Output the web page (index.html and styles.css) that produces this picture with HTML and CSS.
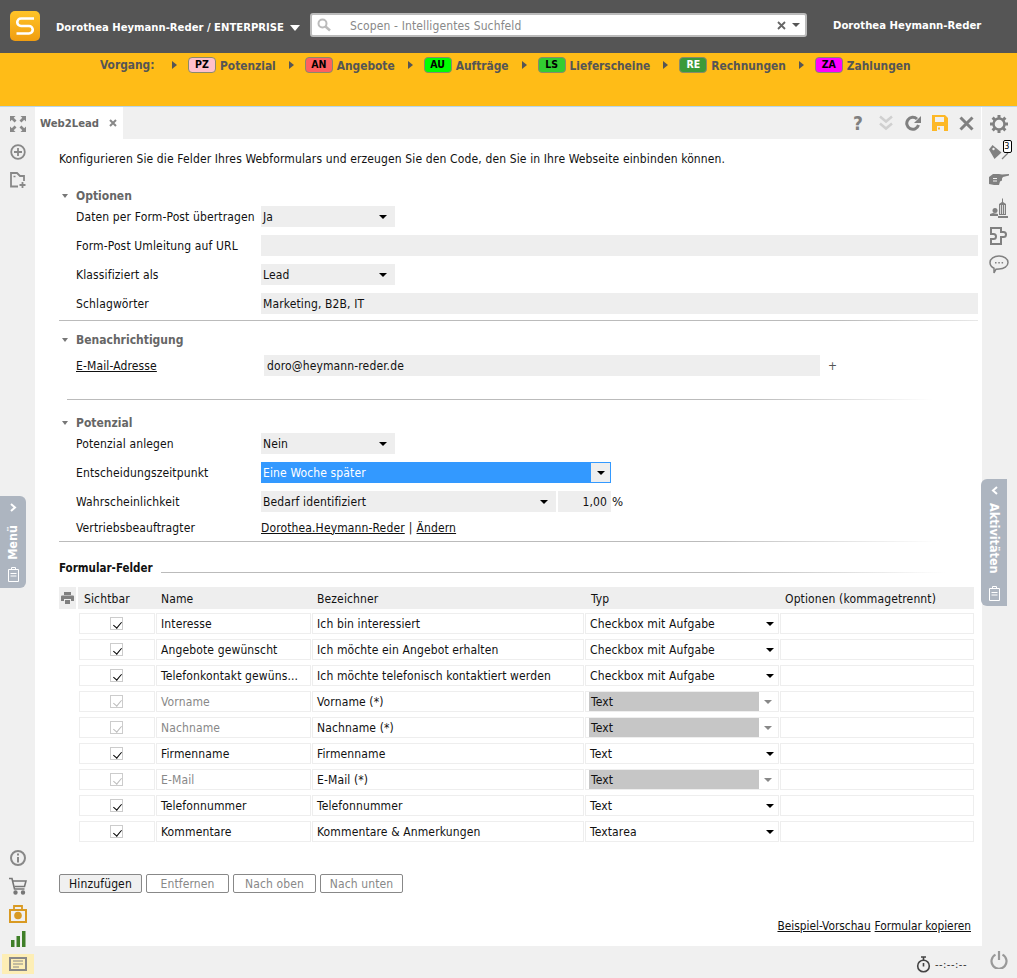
FILE: index.html
```html
<!DOCTYPE html>
<html lang="de">
<head>
<meta charset="utf-8">
<title>Web2Lead</title>
<link rel="stylesheet" href="styles.css">
</head>
<body>
<header class="topbar">
  <svg class="logo" width="30" height="30" viewBox="0 0 30 30"><defs><linearGradient id="lg" x1="0" y1="0" x2="0" y2="1"><stop offset="0" stop-color="#ffc428"/><stop offset="1" stop-color="#f09d10"/></linearGradient></defs><rect width="30" height="30" rx="5" fill="url(#lg)"/><path d="M24 7.5H11a3.7 3.7 0 0 0 0 7.5h8a3.7 3.7 0 0 1 0 7.5H6.500" fill="none" stroke="#fff" stroke-width="2.600"/></svg>
  <div class="account">Dorothea Heymann-Reder / ENTERPRISE</div>
  <span class="caret-white"></span>
  <div class="search">
    <svg class="search-icon" width="14" height="14" viewBox="0 0 14 14"><circle cx="5.500" cy="5.500" r="4" fill="none" stroke="#bbb" stroke-width="2"/><path d="M8.500 8.500l4.500 4" stroke="#bbb" stroke-width="2.500"/></svg>
    <span class="search-text">Scopen - Intelligentes Suchfeld</span>
    <svg width="9" height="9" viewBox="0 0 9 9"><path d="M1 1l7 7M8 1l-7 7" stroke="#666" stroke-width="1.800"/></svg>
    <span class="caret-small"></span>
  </div>
  <div class="user">Dorothea Heymann-Reder</div>
</header>

<nav class="processbar">
  <span class="proc-title">Vorgang:</span>
  <span class="arrow"></span><span class="badge b-pz">PZ</span><span class="proc-name">Potenzial</span>
  <span class="arrow"></span><span class="badge b-an">AN</span><span class="proc-name">Angebote</span>
  <span class="arrow"></span><span class="badge b-au">AU</span><span class="proc-name">Aufträge</span>
  <span class="arrow"></span><span class="badge b-ls">LS</span><span class="proc-name">Lieferscheine</span>
  <span class="arrow"></span><span class="badge b-re">RE</span><span class="proc-name">Rechnungen</span>
  <span class="arrow"></span><span class="badge b-za">ZA</span><span class="proc-name">Zahlungen</span>
</nav>

<div class="shell">
  <aside class="leftbar">
    <div class="left-top">
      <svg width="18" height="18" viewBox="0 0 18 18" fill="#888"><path d="M1 1h5.500L4.700 2.800 7.500 5.600 5.600 7.500 2.800 4.700 1 6.500zM17 1v5.500l-1.800-1.800-2.800 2.800-1.900-1.900 2.800-2.800L11.500 1zM1 17v-5.500l1.800 1.800 2.800-2.800 1.900 1.900-2.800 2.800L6.500 17zM17 17h-5.500l1.800-1.800-2.800-2.800 1.900-1.900 2.800 2.800 1.800-1.800z"/></svg>
      <svg width="18" height="18" viewBox="0 0 18 18"><circle cx="9" cy="9" r="6.800" fill="none" stroke="#888" stroke-width="1.800"/><path d="M9 5v8M5 9h8" stroke="#888" stroke-width="1.800"/></svg>
      <svg width="18" height="18" viewBox="0 0 18 18" fill="none" stroke="#888" stroke-width="1.800"><path d="M9 15.500H2V2h6l3 3h4v5"/><path d="M13.500 11v6M10.500 14h6" stroke-width="1.800"/><path d="M4.500 5.500h2" stroke-width="1.500"/></svg>
    </div>
    <div class="left-bottom">
      <svg width="18" height="18" viewBox="0 0 18 18"><circle cx="9" cy="9" r="7" fill="none" stroke="#888" stroke-width="2"/><path d="M9 4.500v2M9 8v5.500" stroke="#888" stroke-width="2"/></svg>
      <svg width="18" height="18" viewBox="0 0 18 18" fill="none" stroke="#777" stroke-width="1.600"><path d="M0 1.500h3l2.500 10.500h10"/><path d="M4 4h13l-1.500 5.500H5.500"/><circle cx="6.500" cy="15.500" r="1.400" fill="#777"/><circle cx="14" cy="15.500" r="1.400" fill="#777"/></svg>
      <svg width="18" height="18" viewBox="0 0 18 18"><path d="M5 5V1h8v4" fill="none" stroke="#d99a22" stroke-width="1.800"/><rect x="1" y="5" width="16" height="12" fill="none" stroke="#d99a22" stroke-width="2"/><circle cx="9" cy="10.500" r="3.800" fill="#d99a22"/></svg>
      <svg width="18" height="18" viewBox="0 0 18 18" fill="#3f7f28"><rect x="2" y="10" width="3.500" height="7"/><rect x="7.500" y="6" width="3.500" height="11"/><rect x="13" y="1" width="3.500" height="16"/></svg>
      <div class="news-tile"><svg width="18" height="14" viewBox="0 0 18 14"><rect x="1" y="1" width="16" height="12" fill="#fdeeb5" stroke="#888" stroke-width="2"/><path d="M4 4h10M4 7h10M4 10h6" stroke="#888"/></svg></div>
    </div>
  </aside>

  <main class="main">
    <div class="tabbar">
      <div class="tab"><span>Web2Lead</span><svg width="8" height="8" viewBox="0 0 8 8"><path d="M1 1l6 6M7 1L1 7" stroke="#888" stroke-width="2"/></svg></div>
      <div class="tools">
        <span class="q-mark">?</span>
        <svg width="16" height="16" viewBox="0 0 16 16" fill="none" stroke="#d0d0d0" stroke-width="2.500"><path d="M2 1.500l6 5 6-5M2 8.500l6 5 6-5"/></svg>
        <svg width="16" height="16" viewBox="0 0 16 16"><path d="M13.500 10a6 6 0 1 1-1.500-6" fill="none" stroke="#808080" stroke-width="3"/><path d="M16 1v7H9z" fill="#808080"/></svg>
        <svg width="16" height="16" viewBox="0 0 16 16"><path d="M0 0h13l3 3v13H0z" fill="#fdb827"/><path d="M3 2h9v5H3zM5 11h7v5H5z" fill="#f0f0f0"/><path d="M6 12.500h2v2H6z" fill="#fdb827"/></svg>
        <svg width="15" height="15" viewBox="0 0 15 15"><path d="M1.500 1.500l12 12M13.500 1.500l-12 12" stroke="#808080" stroke-width="3"/></svg>
      </div>
    </div>

    <div class="content">
      <p class="intro">Konfigurieren Sie die Felder Ihres Webformulars und erzeugen Sie den Code, den Sie in Ihre Webseite einbinden können.</p>

      <h2 class="sec-head sec-first"><span class="tri-down"></span>Optionen</h2>
      <div class="form-row"><label class="lab">Daten per Form-Post übertragen</label><div class="sel w134"><span>Ja</span><i class="caret"></i></div></div>
      <div class="form-row"><label class="lab">Form-Post Umleitung auf URL</label><div class="inp grow"></div></div>
      <div class="form-row"><label class="lab">Klassifiziert als</label><div class="sel w134"><span>Lead</span><i class="caret"></i></div></div>
      <div class="form-row"><label class="lab">Schlagwörter</label><div class="inp grow">Marketing, B2B, IT</div></div>
      <div class="rule rule-solid"></div>

      <h2 class="sec-head sec-bench"><span class="tri-down"></span>Benachrichtigung</h2>
      <div class="form-row email-row"><a class="lab link">E-Mail-Adresse</a><div class="inp email">doro@heymann-reder.de</div><span class="plus">+</span></div>
      <div class="rule rule-indent"></div>

      <h2 class="sec-head sec-pot"><span class="tri-down"></span>Potenzial</h2>
      <div class="form-row"><label class="lab">Potenzial anlegen</label><div class="sel w134"><span>Nein</span><i class="caret"></i></div></div>
      <div class="form-row"><label class="lab">Entscheidungszeitpunkt</label><div class="sel-active"><span>Eine Woche später</span><b class="sel-btn"><i class="caret"></i></b></div></div>
      <div class="form-row"><label class="lab">Wahrscheinlichkeit</label><div class="sel w295"><span>Bedarf identifiziert</span><i class="caret"></i></div><div class="inp pct">1,00</div><span class="pct-sign">%</span></div>
      <div class="form-row link-row"><label class="lab">Vertriebsbeauftragter</label><a class="link">Dorothea.Heymann-Reder</a><span class="sep">|</span><a class="link">Ändern</a></div>
      <div class="rule rule-fade rule-pot"></div>

      <div class="table-title"><strong>Formular-Felder</strong><div class="rule-fade title-line"></div></div>

      <div class="thead">
        <div class="print-cell"><svg width="13" height="12" viewBox="0 0 13 12"><path d="M3 0h7v3H3zM1 3.500h11a1 1 0 0 1 1 1V9h-3V7H3v2H0V4.500a1 1 0 0 1 1-1zM4 8h5v4H4z" fill="#808080"/></svg></div>
        <div class="head-row">
          <span class="c1">Sichtbar</span><span class="c2">Name</span><span class="c3">Bezeichner</span><span class="c4">Typ</span><span class="c5">Optionen (kommagetrennt)</span>
        </div>
      </div>

      <div class="trow"><div class="cell c1"><i class="check"></i></div><div class="cell c2">Interesse</div><div class="cell c3">Ich bin interessiert</div><div class="cell c4"><span>Checkbox mit Aufgabe</span><i class="caret"></i></div><div class="cell c5"></div></div>
      <div class="trow"><div class="cell c1"><i class="check"></i></div><div class="cell c2">Angebote gewünscht</div><div class="cell c3">Ich möchte ein Angebot erhalten</div><div class="cell c4"><span>Checkbox mit Aufgabe</span><i class="caret"></i></div><div class="cell c5"></div></div>
      <div class="trow"><div class="cell c1"><i class="check"></i></div><div class="cell c2">Telefonkontakt gewüns...</div><div class="cell c3">Ich möchte telefonisch kontaktiert werden</div><div class="cell c4"><span>Checkbox mit Aufgabe</span><i class="caret"></i></div><div class="cell c5"></div></div>
      <div class="trow"><div class="cell c1"><i class="check off"></i></div><div class="cell c2 muted">Vorname</div><div class="cell c3">Vorname (*)</div><div class="cell c4 locked"><span>Text</span><i class="caret"></i></div><div class="cell c5"></div></div>
      <div class="trow"><div class="cell c1"><i class="check off"></i></div><div class="cell c2 muted">Nachname</div><div class="cell c3">Nachname (*)</div><div class="cell c4 locked"><span>Text</span><i class="caret"></i></div><div class="cell c5"></div></div>
      <div class="trow"><div class="cell c1"><i class="check"></i></div><div class="cell c2">Firmenname</div><div class="cell c3">Firmenname</div><div class="cell c4"><span>Text</span><i class="caret"></i></div><div class="cell c5"></div></div>
      <div class="trow"><div class="cell c1"><i class="check off"></i></div><div class="cell c2 muted">E-Mail</div><div class="cell c3">E-Mail (*)</div><div class="cell c4 locked"><span>Text</span><i class="caret"></i></div><div class="cell c5"></div></div>
      <div class="trow"><div class="cell c1"><i class="check"></i></div><div class="cell c2">Telefonnummer</div><div class="cell c3">Telefonnummer</div><div class="cell c4"><span>Text</span><i class="caret"></i></div><div class="cell c5"></div></div>
      <div class="trow"><div class="cell c1"><i class="check"></i></div><div class="cell c2">Kommentare</div><div class="cell c3">Kommentare &amp; Anmerkungen</div><div class="cell c4"><span>Textarea</span><i class="caret"></i></div><div class="cell c5"></div></div>

      <div class="buttons">
        <button class="btn btn-on">Hinzufügen</button>
        <button class="btn">Entfernen</button>
        <button class="btn">Nach oben</button>
        <button class="btn">Nach unten</button>
      </div>
      <div class="foot-links"><a class="link">Beispiel-Vorschau</a><a class="link">Formular kopieren</a></div>
    </div>

    <div class="statusbar">
      <svg width="15" height="17" viewBox="0 0 15 17" fill="none" stroke="#444" stroke-width="1.600"><circle cx="7.500" cy="10" r="5.800"/><path d="M5 1h5M7.500 1v3M7.500 7v3.500"/></svg>
      <span class="clock">--:--:--</span>
    </div>
  </main>

  <aside class="rightbar">
    <div class="r-slot"><svg width="20" height="20" viewBox="0 0 20 20"><circle cx="10" cy="10" r="5.500" fill="none" stroke="#808080" stroke-width="2.500"/><path d="M10 1v4M10 15v4M1 10h4M15 10h4M3.600 3.600l2.900 2.900M13.500 13.500l2.900 2.900M16.400 3.600l-2.900 2.900M6.500 13.500l-2.900 2.900" stroke="#808080" stroke-width="3"/></svg></div>
    <div class="r-slot tag-wrap"><svg class="tag-icon" width="20" height="16" viewBox="0 0 20 16"><path d="M0 5.500L3.500 1l9 7.500-7 6.500z" fill="#808080"/><path d="M13 15l6-6" fill="none" stroke="#808080" stroke-width="1.300"/><circle cx="4.500" cy="5" r="1.200" fill="#f0f0f0"/></svg><span class="tag-count">3</span></div>
    <div class="r-slot"><svg width="20" height="14" viewBox="0 0 20 14" fill="#808080"><path d="M0 4l4-3h6l3 .5L20 1v1.500l-6 1.500-1 1.500v2l-2 1-1 3.500H5L0 11z"/><path d="M4 5.500h4M4 8h4" stroke="#f0f0f0"/></svg></div>
    <div class="r-slot"><svg width="18" height="20" viewBox="0 0 18 20" fill="#808080"><path d="M9 6l3-2V0.500h1V4l3 2v11h-7z"/><path d="M10.500 7v9M12.500 7v9M14.500 7v9" stroke="#f0f0f0" stroke-width=".8"/><circle cx="5" cy="12.500" r="2.500"/><path d="M0 20v-4l3-1 5 1v4zM0 20h18v-2H0z"/></svg></div>
    <div class="r-slot"><svg width="19" height="18" viewBox="0 0 19 18" fill="none" stroke="#808080" stroke-width="2"><path d="M1 1h10v4h2.500a2.500 2.500 0 0 1 2.500 2.500A2.500 2.500 0 0 1 13.500 10H11v7H1v-5h2.500a2.500 2.500 0 0 0 0-5H1z"/></svg></div>
    <div class="r-slot"><svg width="20" height="20" viewBox="0 0 20 20"><path d="M10 2c5 0 9 2.800 9 6.500S15 15 10 15l-3 .2L5 19v-4.800C2.500 13 1 11 1 8.500 1 4.800 5 2 10 2z" fill="none" stroke="#808080" stroke-width="1.500"/><path d="M6 8.800h1.500M9.300 8.800h1.500M12.600 8.800h1.500" stroke="#808080" stroke-width="1.500"/></svg></div>
    <svg class="power" width="18" height="18" viewBox="0 0 18 18" fill="none" stroke="#999" stroke-width="2.200"><path d="M5.500 3.600a7.500 7.500 0 1 0 7 0"/><path d="M9 0v9"/></svg>
  </aside>
</div>

<div class="side-tab menu-tab">
  <svg width="9" height="9" viewBox="0 0 9 9"><path d="M2 1l4 3.500L2 8" fill="none" stroke="#fff" stroke-width="2"/></svg>
  <span class="side-text text-up">Menü</span>
  <svg width="11" height="15" viewBox="0 0 11 15" fill="none" stroke="#fff"><path d="M.5 2.500h10v12H.5zM2.500 6.500h6M2.500 9h6M3.500 2.500v-2h4v2"/></svg>
</div>
<div class="side-tab act-tab">
  <svg width="9" height="9" viewBox="0 0 9 9"><path d="M7 1L3 4.500 7 8" fill="none" stroke="#fff" stroke-width="2"/></svg>
  <span class="side-text">Aktivitäten</span>
  <svg width="11" height="15" viewBox="0 0 11 15" fill="none" stroke="#fff"><path d="M.5 2.500h10v12H.5zM2.500 6.500h6M2.500 9h6M3.500 2.500v-2h4v2"/></svg>
</div>
</body>
</html>
```
FILE: styles.css
```css
* { box-sizing: border-box; }
html, body { margin: 0; padding: 0; }
body {
  position: relative;
  width: 1017px;
  height: 978px;
  overflow: hidden;
  background: #f0f0f0;
  color: #111;
  font-family: "DejaVu Sans", sans-serif;
  font-stretch: condensed;
  font-size: 12px;
  letter-spacing: .13px;
}
a.link { color: #111; text-decoration: underline; }

/* top bar */
.topbar { height: 53px; background: #555; display: flex; align-items: center; padding-left: 10px; color: #fff; letter-spacing: 0; }
.logo { flex: none; margin-top: -1px; }
.account { margin-left: 16px; font-weight: 700; font-size: 11.200px; white-space: nowrap; width: 229px; padding-top: 2px; }
.caret-white { margin-left: 5px; margin-top: 2px; border: 5px solid transparent; border-top: 6px solid #fff; border-bottom: 0; }
.search { margin-left: 10px; margin-top: -3px; width: 497px; height: 24px; background: #fff; border: 2px solid #bbb; border-radius: 3px; display: flex; align-items: center; padding: 0 5px 0 5px; }
.search-icon { flex: none; }
.search-text { flex: 1; margin-left: 19px; color: #888; font-size: 12px; letter-spacing: .13px; padding-top: 1px; }
.caret-small { margin-left: 6px; border: 4px solid transparent; border-top: 4px solid #555; border-bottom: 0; }
.user { margin-left: 26px; font-weight: 700; font-size: 11.250px; white-space: nowrap; margin-top: -3px; }

/* process bar */
.processbar { height: 54px; background: #ffbc17; border-bottom: 1px solid #b9d6ea; display: flex; align-items: flex-start; padding: 4px 0 0 100px; color: #555; font-weight: 700; font-size: 11.850px; line-height: 16px; letter-spacing: 0; }
.proc-title { width: 72px; margin-top: 0; }
.arrow { margin: 4px 11px 0 0; width: 0; height: 0; border: 4px solid transparent; border-left: 5px solid #555; border-right: 0; }
.badge { width: 28px; height: 16px; border-radius: 4px; border: 1px solid #8a8a6a; color: #000; font-size: 10.500px; line-height: 13px; text-align: center; margin-right: 4px; }
.proc-name { margin-right: 13px; margin-top: 1px; white-space: nowrap; }
.b-pz { background: #ffc0cb; }
.b-an { background: #ff6060; }
.b-au { background: #00ff00; }
.b-ls { background: #32cd32; }
.b-re { background: #3a9a3a; color: #fff; }
.b-za { background: #ff00ff; }

/* shell */
.shell { display: grid; grid-template-columns: 35px 947px 35px; height: 871px; }
.leftbar { display: flex; flex-direction: column; justify-content: space-between; align-items: center; padding: 8px 0 4px; }
.left-top { display: flex; flex-direction: column; align-items: center; gap: 10px; }
.left-bottom { display: flex; flex-direction: column; align-items: center; gap: 10px; }
.left-bottom svg:nth-child(4) { margin-top: -3px; margin-bottom: -1px; }
.news-tile { width: 32px; height: 20px; margin-top: -3px; background: #fdeeb5; display: flex; align-items: center; justify-content: center; }

.main { display: flex; flex-direction: column; }
.tabbar { height: 32px; display: flex; justify-content: space-between; align-items: center; border-right: 1px solid #fff; }
.tab { width: 88px; height: 32px; background: #fff; display: flex; align-items: center; padding-left: 5px; color: #666; font-weight: 700; font-size: 11.200px; letter-spacing: 0; gap: 8px; }
.tab svg { margin-left: 2px; }
.tools { display: flex; align-items: center; gap: 11px; padding-right: 7px; }
.q-mark { color: #808080; font-weight: 700; font-size: 19px; line-height: 16px; width: 12px; text-align: center; margin-right: 3px; }

.content { height: 807px; background: #fff; padding: 10px 4px 0 24px; }
.intro { margin: 0; line-height: 20px; white-space: nowrap; }
.sec-head { margin: 0; height: 16px; line-height: 16px; font-size: 12px; font-weight: 700; color: #666; letter-spacing: 0; display: flex; align-items: center; padding-left: 3px; }
.sec-first { margin-top: 19px; margin-bottom: 2px; }
.sec-bench { margin-top: 11px; margin-bottom: 7px; }
.sec-pot { margin-top: 15px; margin-bottom: 2px; }
.tri-down { width: 0; height: 0; border: 3.500px solid transparent; border-top: 4px solid #777; border-bottom: 0; margin-right: 8px; }

.form-row { display: flex; align-items: center; height: 21px; margin-bottom: 8px; padding-left: 17px; }
.lab { width: 185px; flex: none; white-space: nowrap; }
.sel, .inp { height: 21px; line-height: 22px; background: #eee; padding-left: 2px; }
.sel { display: flex; align-items: center; justify-content: space-between; padding-right: 8px; }
.sel span, .sel-active span { margin-top: 1px; }
.w134 { width: 134px; }
.w295 { width: 295px; }
.grow { flex: 1; }
.caret { flex: none; width: 0; height: 0; border: 4px solid transparent; border-top: 4px solid #000; border-bottom: 0; }
.email-row { margin-bottom: 0; }
.email { width: 556px; margin-left: 3px; padding-left: 3px; }
.plus { margin-left: 8px; color: #555; }
.sel-active { width: 350px; height: 21px; background: #39f; border: 1px solid #39f; color: #fff; display: flex; align-items: center; justify-content: space-between; padding-left: 1px; }
.sel-btn { width: 19px; height: 19px; background: #eee; display: flex; align-items: center; justify-content: center; }
.pct { width: 53px; margin-left: 2px; text-align: right; padding-right: 4px; }
.pct-sign { margin-left: 1px; font-size: 13px; }
.link-row { height: 15px; margin-bottom: 0; }
.sep { margin: 0 4px; }

.rule { height: 1px; }
.rule-solid { background: linear-gradient(to right, #bbb 85%, #e8e8e8); margin-top: -2px; }
.rule-indent { background: linear-gradient(to right, #bbb 75%, #fff 95%); margin: 23px 0 0 8px; }
.rule-fade { background: linear-gradient(to right, #bbb 70%, #fff 96%); }
.rule-pot { margin-top: 6px; }

.table-title { display: flex; align-items: center; height: 16px; margin-top: 18px; font-size: 11.500px; letter-spacing: 0; }
.table-title strong { width: 102px; flex: none; }
.title-line { flex: 1; height: 1px; margin-top: 8px; }

.thead { display: flex; margin-top: 11px; height: 22px; margin-right: 4px; }
.print-cell { width: 17px; background: #eee; display: flex; align-items: center; justify-content: center; margin-right: 2px; }
.head-row { flex: 1; background: #eee; display: flex; align-items: center; padding-top: 1px; }
.head-row span { padding-left: 6px; }
.head-row .c1 { width: 78px; }
.head-row .c2 { width: 156px; padding-left: 5px; }
.head-row .c3 { width: 273px; padding-left: 5px; }
.head-row .c4 { width: 195px; padding-left: 6px; }
.head-row .c5 { padding-left: 5px; }

.trow { display: flex; gap: 1px; height: 21px; margin: 4px 4px 0 20px; }
.trow + .trow { margin-top: 5px; }
.cell { height: 21px; border: 1px solid #eee; display: flex; align-items: center; padding: 0 4px; white-space: nowrap; overflow: hidden; }
.trow .c1 { width: 76px; justify-content: center; }
.trow .c2 { width: 155px; }
.trow .c3 { width: 272px; }
.trow .c4 { width: 194px; padding: 0 4px; justify-content: space-between; }
.trow .c5 { width: 194px; }
.muted { color: #888; }
.check { width: 13px; height: 13px; border: 1px solid #ccc; background: #fff; position: relative; display: block; margin-left: -1px; }
.check::after { content: ""; position: absolute; left: 3.500px; top: 1.500px; width: 4px; height: 7px; border: solid #000; border-width: 0 1.500px 1.500px 0; transform: rotate(40deg); }
.check.off::after { border-color: #bbb; }
.trow .locked { padding: 1px 6px 1px 3px; }
.locked span { background: #c6c6c6; width: 170px; height: 19px; line-height: 20px; padding-left: 2px; }
.locked .caret { border-top-color: #888; }

.buttons { display: flex; gap: 4px; margin-top: 32px; }
.btn { width: 83px; height: 19px; padding: 0; background: #fff; border: 1px solid #888; border-radius: 2px; color: #888; font: 12px/16px "DejaVu Sans", sans-serif; font-stretch: condensed; letter-spacing: .13px; }
.btn-on { background: #f0f0f0; color: #111; }
.foot-links { display: flex; justify-content: flex-end; gap: 4px; margin-top: 26px; padding-right: 7px; font-size: 11.800px; letter-spacing: 0; }

.statusbar { height: 32px; display: flex; align-items: center; justify-content: flex-end; gap: 4px; padding-right: 15px; padding-top: 4px; }
.clock { font-size: 11px; letter-spacing: .5px; color: #333; }

.rightbar { display: flex; flex-direction: column; align-items: center; padding: 3px 1px 0 0; }
.r-slot { height: 28px; display: flex; align-items: center; justify-content: center; flex: none; }
.tag-wrap { position: relative; width: 24px; margin-left: -5px; }
.tag-icon { margin-left: 4px; margin-top: -1px; }
.tag-count { position: absolute; left: 18px; top: 2px; width: 9px; height: 13px; background: #fff; border: 1px solid #000; border-radius: 2px; font-size: 9px; line-height: 11px; text-align: center; color: #000; }
.power { margin-top: auto; margin-bottom: 9px; }

/* sliding tabs */
.side-tab { position: absolute; background: #adb5c0; color: #fff; display: flex; flex-direction: column; align-items: center; padding: 7px 0 5px; }
.menu-tab { left: 0; top: 496px; width: 26px; height: 92px; border-radius: 0 6px 6px 0; }
.act-tab { left: 981px; top: 479px; width: 26px; height: 127px; border-radius: 6px 0 0 6px; }
.side-text { writing-mode: vertical-rl; font-weight: 700; font-size: 12.500px; letter-spacing: 0; line-height: 14px; margin: 8px 0 auto; }
.menu-tab svg:last-child { margin-bottom: 1px; }
.text-up { transform: rotate(180deg); margin-top: auto; margin-bottom: 7px; }
```
